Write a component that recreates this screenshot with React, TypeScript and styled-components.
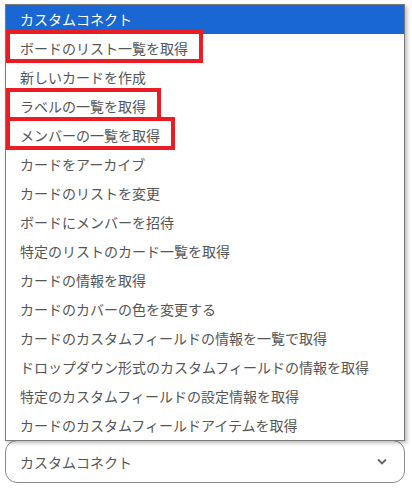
import React from "react";
import styled, { createGlobalStyle } from "styled-components";

// ** Global **
const GlobalStyle = createGlobalStyle`
    body {
        margin: 0;
        background: #fff;
        font-family: "Noto Sans CJK JP", "Noto Sans", sans-serif;
    }
`

// ** Styled-Component **
const Page = styled.div`
    width: 400px;
    padding: 4px 0 0 5px;
`
const ListBox = styled.ul`
    position: relative;
    z-index: 1;
    margin: 0;
    padding: 0;
    list-style: none;
    border: 1px solid #7a7a7a;
    background: #fff;
    box-shadow: 2px 2px 4px rgba(0,0,0,0.28);
`
const Option = styled.li<{ selected?: boolean }>`
    height: 29px;
    padding-left: 14px;
    font-size: 14px;
    line-height: 29px;
    white-space: nowrap;
    color: ${(props) => props.selected ? '#fff' : '#555'};
    background: ${(props) => props.selected ? '#1967d2' : 'transparent'};
`
const Mark = styled.span`
    position: relative;
    display: inline-block;
    &::after {
        content: "";
        position: absolute;
        top: -4px;
        bottom: 0;
        left: -14px;
        right: -15px;
        border: 4px solid #ec1c24;
    }
`
const SelectBox = styled.div`
    display: flex;
    align-items: center;
    justify-content: space-between;
    height: 41px;
    margin-top: -1px;
    padding: 0 17px 0 14px;
    border: 1px solid #8a8a8a;
    border-radius: 12px;
    font-size: 14px;
    color: #555;
`

const items = [
    { label: "ボードのリスト一覧を取得", marked: true },
    { label: "新しいカードを作成" },
    { label: "ラベルの一覧を取得", marked: true },
    { label: "メンバーの一覧を取得", marked: true },
    { label: "カードをアーカイブ" },
    { label: "カードのリストを変更" },
    { label: "ボードにメンバーを招待" },
    { label: "特定のリストのカード一覧を取得" },
    { label: "カードの情報を取得" },
    { label: "カードのカバーの色を変更する" },
    { label: "カードのカスタムフィールドの情報を一覧で取得" },
    { label: "ドロップダウン形式のカスタムフィールドの情報を取得" },
    { label: "特定のカスタムフィールドの設定情報を取得" },
    { label: "カードのカスタムフィールドアイテムを取得" },
]

function Chevron() {
    return (
        <svg width="10" height="7" viewBox="0 0 10 7">
            <path d="M1 1.5 L5 5.5 L9 1.5" fill="none" stroke="#666" strokeWidth="1.8" />
        </svg>
    )
}

function App() {
    return (
        <Page>
            <GlobalStyle />
            <ListBox>
                <Option selected>カスタムコネクト</Option>
                {items.map((item) => (
                    <Option key={item.label}>
                        {item.marked ? <Mark>{item.label}</Mark> : item.label}
                    </Option>
                ))}
            </ListBox>
            <SelectBox>
                <span>カスタムコネクト</span>
                <Chevron />
            </SelectBox>
        </Page>
    );
}

export default App;
